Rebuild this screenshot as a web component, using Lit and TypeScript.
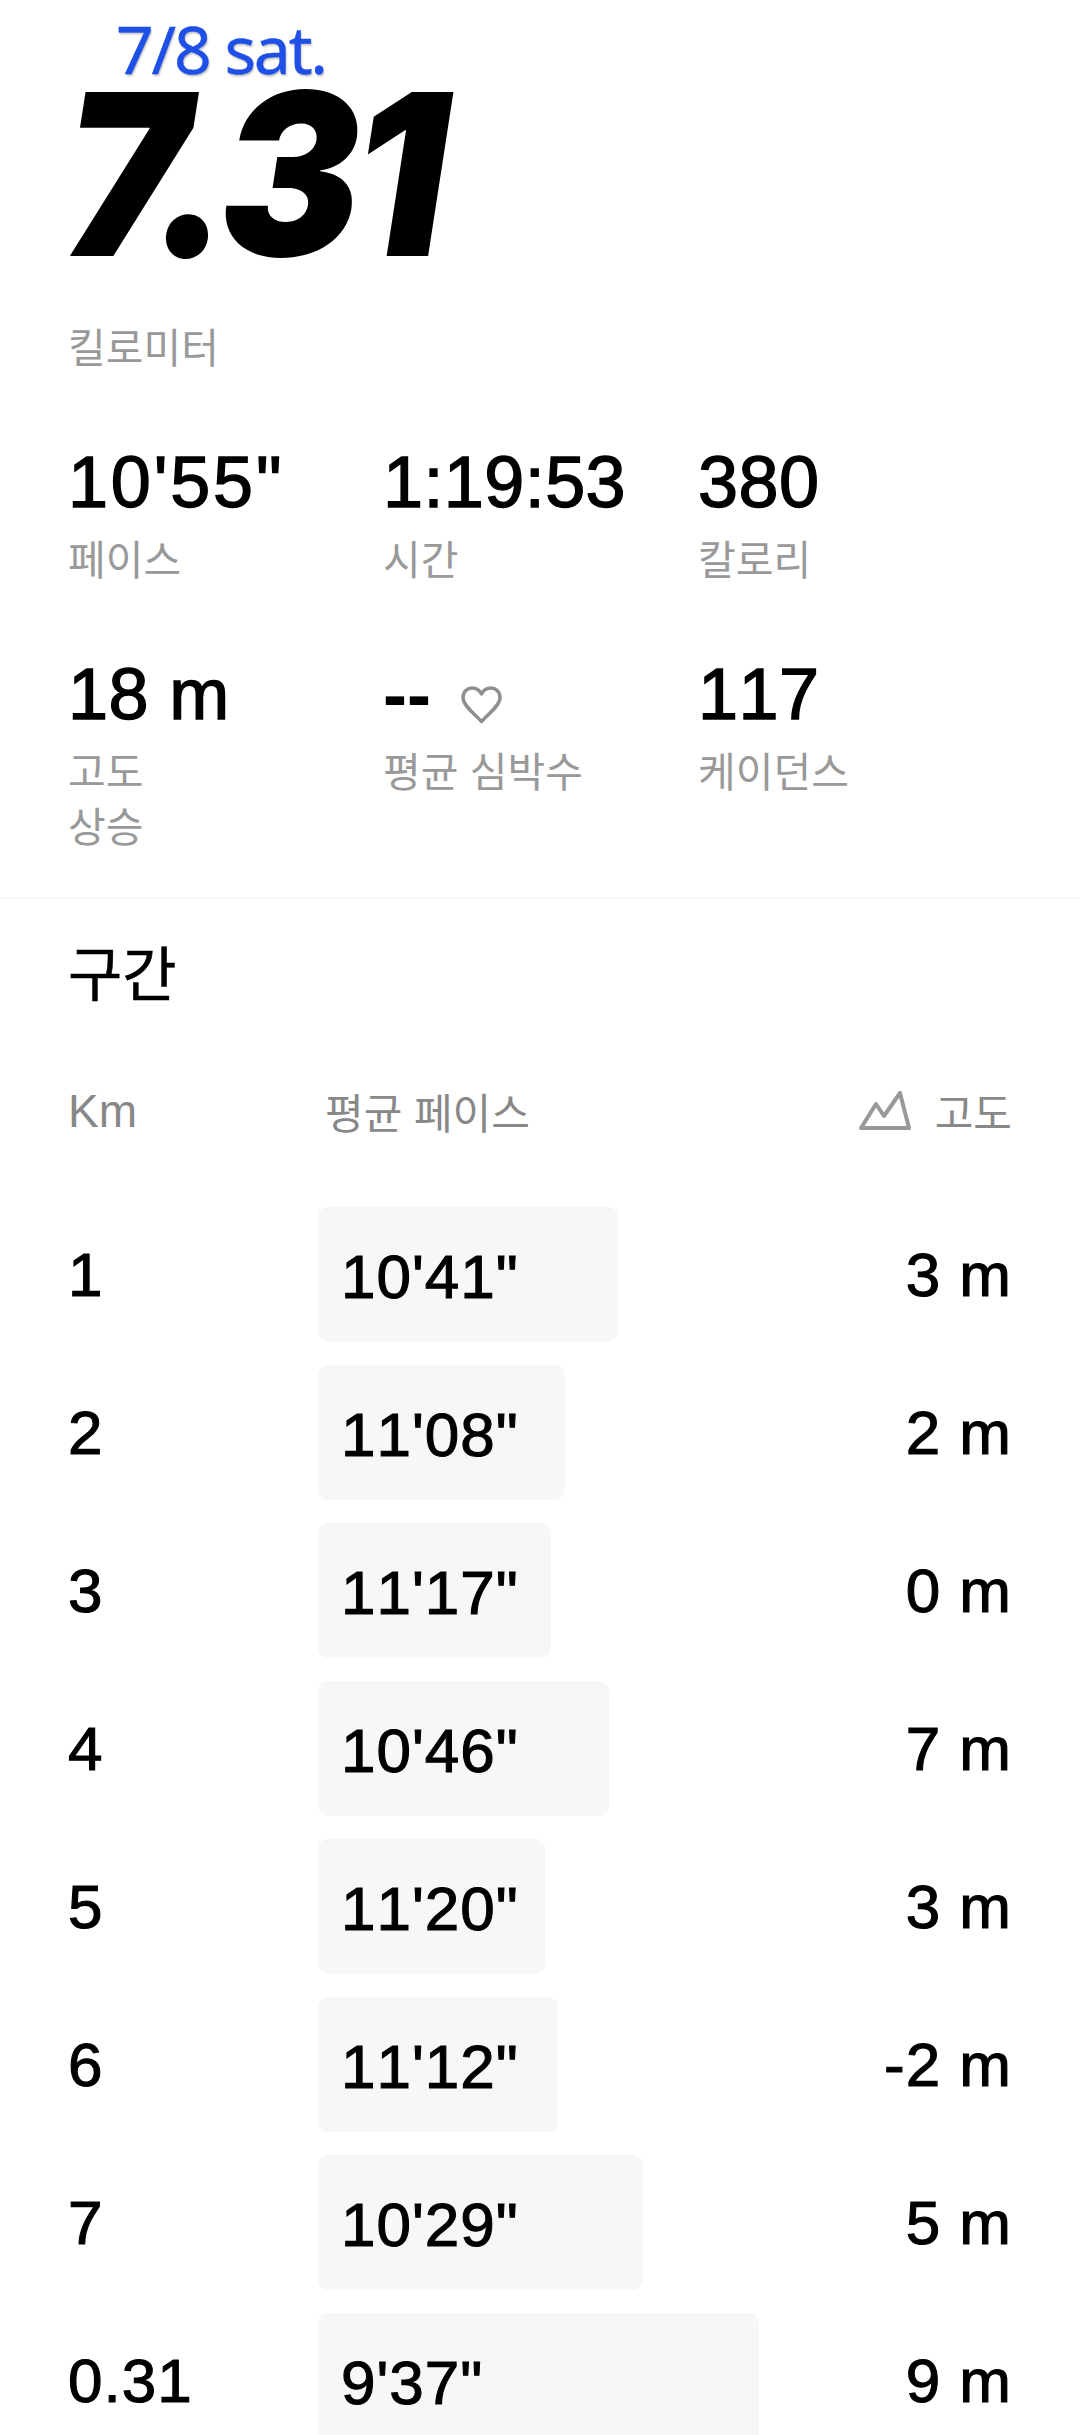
import { LitElement, css, html } from "lit";
import { customElement } from "lit/decorators.js";

interface Split {
  km: string;
  pace: string;
  barWidth: number;
  elevation: string;
}

const SPLITS: Split[] = [
  { km: "1", pace: `10'41"`, barWidth: 300, elevation: "3 m" },
  { km: "2", pace: `11'08"`, barWidth: 247, elevation: "2 m" },
  { km: "3", pace: `11'17"`, barWidth: 233, elevation: "0 m" },
  { km: "4", pace: `10'46"`, barWidth: 291, elevation: "7 m" },
  { km: "5", pace: `11'20"`, barWidth: 227, elevation: "3 m" },
  { km: "6", pace: `11'12"`, barWidth: 240, elevation: "-2 m" },
  { km: "7", pace: `10'29"`, barWidth: 325, elevation: "5 m" },
  { km: "0.31", pace: `9'37"`, barWidth: 441, elevation: "9 m" },
];

@customElement("app-root")
export class AppRoot extends LitElement {
  static styles = css`
    :host {
      display: block;
      background: #fff;
      color: #000;
      font-family: "Liberation Sans", "Noto Sans CJK KR", sans-serif;
      font-kerning: none;
      height: 2435px;
      overflow: hidden;
    }
    .summary {
      padding: 0 0 0 68px;
      height: 897px;
      border-bottom: 2px solid #f6f6f6;
    }
    .date {
      margin: 0 0 0 48px;
      padding-top: 14px;
      height: 64px;
      font-family: "Noto Sans", sans-serif;
      font-kerning: normal;
      font-size: 66px;
      line-height: 68px;
      letter-spacing: -2.2px;
      color: #1e4fe6;
      text-shadow: 1px 2px 2px rgba(0, 0, 0, 0.25);
      -webkit-text-stroke: 0.4px #1e4fe6;
    }
    .distance {
      height: 200px;
      font-family: Inter, sans-serif;
      font-kerning: normal;
      font-size: 226px;
      font-weight: 900;
      font-style: italic;
      line-height: 192px;
      letter-spacing: -9px;
      margin-left: -4px;
      transform: scaleX(0.93);
      transform-origin: left center;
    }
    .unit {
      margin-top: 43px;
      font-size: 41px;
      line-height: 56px;
      color: #999;
    }
    .stats {
      display: grid;
      grid-template-columns: repeat(3, 315px);
      grid-auto-rows: 212px;
      margin-top: 65px;
    }
    .value {
      display: flex;
      align-items: center;
      gap: 30px;
      font-size: 72px;
      line-height: 80px;
      letter-spacing: 0.4px;
      -webkit-text-stroke: 1.4px #000;
    }
    .pace {
      letter-spacing: 2.8px;
    }
    .dashes {
      font-weight: 700;
      letter-spacing: 0;
      -webkit-text-stroke: 0;
    }
    .label {
      margin-top: 12px;
      font-size: 41px;
      line-height: 55px;
      color: #999;
    }
    .heart {
      width: 41px;
      height: 38px;
      margin-top: 21px;
    }
    .splits {
      padding: 0 68px;
    }
    h2 {
      margin: 0;
      padding-top: 37px;
      font-size: 59px;
      font-weight: 400;
      line-height: 80px;
      -webkit-text-stroke: 0.5px #000;
    }
    .head {
      display: grid;
      grid-template-columns: 257px 1fr auto;
      align-items: center;
      margin-top: 64px;
      height: 56px;
      font-size: 42px;
      color: #888;
    }
    .head .km {
      font-size: 46px;
    }
    .elev {
      display: flex;
      align-items: center;
      gap: 24px;
    }
    .mountain {
      width: 52px;
      height: 40px;
    }
    .rows {
      display: flex;
      flex-direction: column;
      gap: 23px;
      margin-top: 69px;
    }
    .row {
      display: grid;
      grid-template-columns: 250px 1fr auto;
      align-items: center;
      height: 135px;
      font-size: 62px;
      letter-spacing: 1px;
      line-height: 139px;
      -webkit-text-stroke: 1.1px #000;
    }
    .bar {
      box-sizing: border-box;
      height: 135px;
      padding-left: 23px;
      background: #f7f7f7;
      border-radius: 10px;
    }
  `;

  private stat(value: unknown, label: unknown) {
    return html`<div>
      <div class="value">${value}</div>
      <div class="label">${label}</div>
    </div>`;
  }

  render() {
    const heart = html`<svg class="heart" viewBox="0 0 41 38" fill="none">
      <path
        d="M20.5 35.5 C14 28 2 20 2 11.5 C2 5.5 6.5 2 11 2 C15 2 18.5 4 20.5 8 C22.5 4 26 2 30 2 C34.5 2 39 5.5 39 11.5 C39 20 27 28 20.5 35.5 Z"
        stroke="#8f8f8f"
        stroke-width="3.5"
        stroke-linejoin="round"
      />
    </svg>`;
    return html`
      <section class="summary">
        <div class="date">7/8 sat.</div>
        <div class="distance">7.31</div>
        <div class="unit">킬로미터</div>
        <div class="stats">
          ${this.stat(html`<span class="pace">10'55"</span>`, "페이스")}
          ${this.stat("1:19:53", "시간")} ${this.stat("380", "칼로리")}
          ${this.stat("18 m", html`고도<br />상승`)}
          ${this.stat(
            html`<span class="dashes">--</span>${heart}`,
            "평균 심박수",
          )}
          ${this.stat("117", "케이던스")}
        </div>
      </section>
      <section class="splits">
        <h2>구간</h2>
        <div class="head">
          <span class="km">Km</span>
          <span>평균 페이스</span>
          <span class="elev">
            <svg class="mountain" viewBox="0 0 52 40" fill="none">
              <path
                d="M2 37 L17 13 L25 25 L41 2 L50 37 Z"
                stroke="#999"
                stroke-width="4"
                stroke-linejoin="round"
              />
            </svg>
            고도
          </span>
        </div>
        <div class="rows">
          ${SPLITS.map(
            (s) => html`<div class="row">
              <span>${s.km}</span>
              <div>
                <div class="bar" style="width: ${s.barWidth}px">${s.pace}</div>
              </div>
              <span>${s.elevation}</span>
            </div>`,
          )}
        </div>
      </section>
    `;
  }
}

declare global {
  interface HTMLElementTagNameMap {
    "app-root": AppRoot;
  }
}
